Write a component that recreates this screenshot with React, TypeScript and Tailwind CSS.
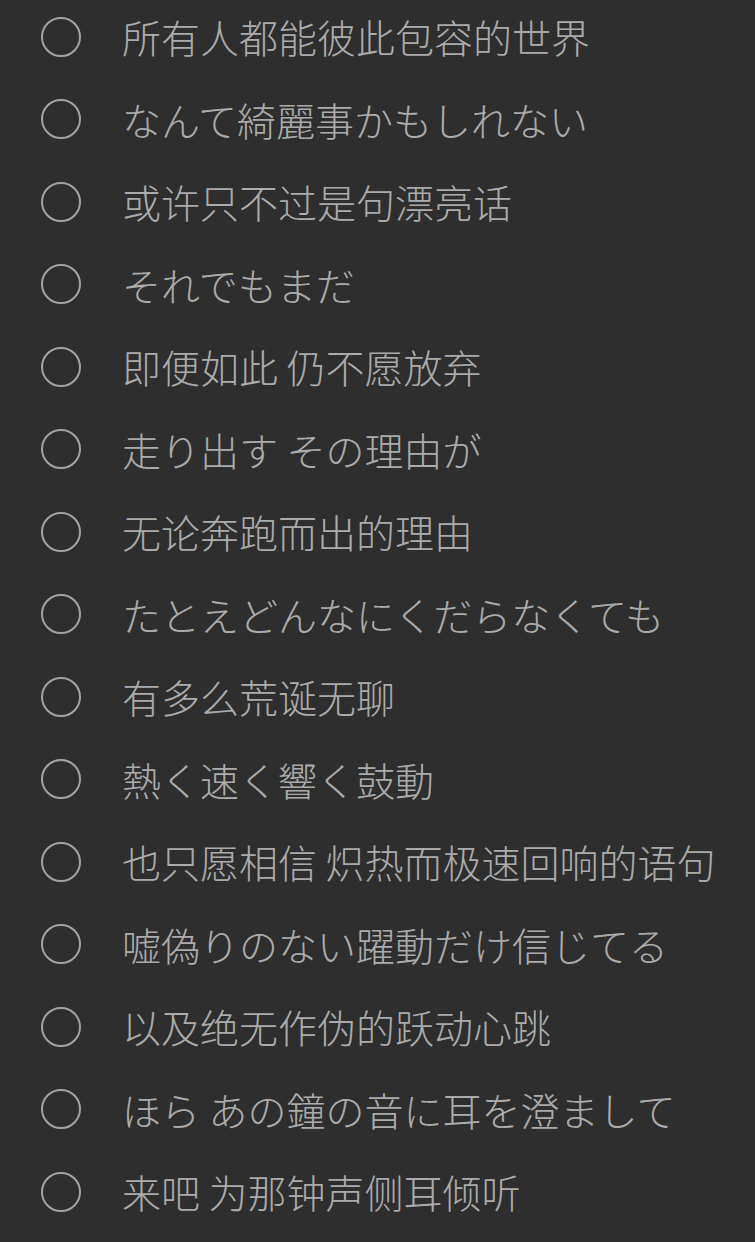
import React from "react";

const lines: { t: string; jp: boolean }[] = [
  { t: "所有人都能彼此包容的世界", jp: false },
  { t: "なんて綺麗事かもしれない", jp: true },
  { t: "或许只不过是句漂亮话", jp: false },
  { t: "それでもまだ", jp: true },
  { t: "即便如此 仍不愿放弃", jp: false },
  { t: "走り出す その理由が", jp: true },
  { t: "无论奔跑而出的理由", jp: false },
  { t: "たとえどんなにくだらなくても", jp: true },
  { t: "有多么荒诞无聊", jp: false },
  { t: "熱く速く響く鼓動", jp: true },
  { t: "也只愿相信 炽热而极速回响的语句", jp: false },
  { t: "嘘偽りのない躍動だけ信じてる", jp: true },
  { t: "以及绝无作伪的跃动心跳", jp: false },
  { t: "ほら あの鐘の音に耳を澄まして", jp: true },
  { t: "来吧 为那钟声侧耳倾听", jp: false },
];

export default function App() {
  return (
    <div className="w-[755px] h-[1242px] overflow-hidden bg-[#2e2e2e]">
      <div className="flex flex-col mt-[-4.5px]">
        {lines.map((l, i) => (
          <div key={i} className="flex items-center h-[82.5px] pl-[41px]">
            <div className="w-[40px] h-[40px] rounded-full border-[2.5px] border-[#a3a3a3] shrink-0" />
            <div
              className={
                "ml-[41px] text-[39px] font-light leading-none text-[#ababab] whitespace-nowrap " +
                (l.jp
                  ? "[font-family:'Noto_Sans_CJK_JP','Noto_Sans_CJK_SC',sans-serif]"
                  : "[font-family:'Noto_Sans_CJK_SC','Noto_Sans_CJK_JP',sans-serif]")
              }
            >
              {l.t}
            </div>
          </div>
        ))}
      </div>
    </div>
  );
}
